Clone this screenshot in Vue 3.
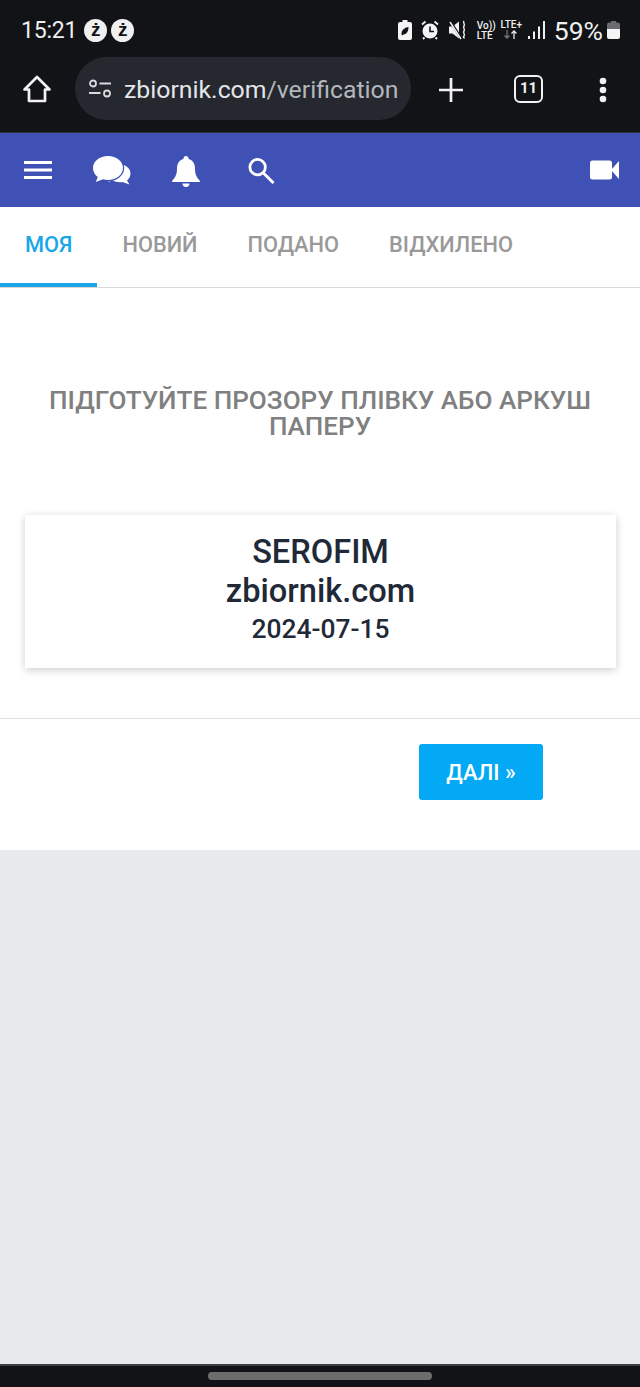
<script setup>
const tabs = [
  { label: 'МОЯ', active: true },
  { label: 'НОВИЙ' },
  { label: 'ПОДАНО' },
  { label: 'ВІДХИЛЕНО' }
]
</script>

<template>
  <div class="screen">
    <div class="chrome">
      <div class="status">
        <span class="time">15:21</span>
        <span class="zed">ż</span>
        <span class="zed">ż</span>
        <span class="spacer"></span>
        <svg class="st st-save" width="14" height="20" viewBox="0 0 14 20"><path d="M4.500 0h5v2H12a2 2 0 0 1 2 2v14a2 2 0 0 1-2 2H2a2 2 0 0 1-2-2V4a2 2 0 0 1 2-2h2.500z" fill="#f4f4f4"/><path d="M3.500 14c0-4 3-6.500 7-7 0 4-1.500 7-5 7.500l-1.500 1z" fill="#111317"/></svg>
        <svg class="st st-alarm" width="18" height="20" viewBox="0 0 18 20"><circle cx="9" cy="11" r="7.500" fill="#f4f4f4"/><path d="M9 6.500V11.500H13" fill="none" stroke="#111317" stroke-width="1.600"/><path d="M1 4.500 4.500 1.500M17 4.500 13.500 1.500M3.500 17.500 2 19M14.500 17.500 16 19" stroke="#f4f4f4" stroke-width="1.800"/></svg>
        <svg class="st st-mute" width="18" height="20" viewBox="0 0 18 20"><path d="M0 6.500h3.500L10 1.500v17L3.500 13.500H0z" fill="#f4f4f4"/><path d="M1 1 12 18" stroke="#111317" stroke-width="2.500"/><path d="M1 2 12 19" stroke="#f4f4f4" stroke-width="1.400"/><path d="M15 1c-1.500 2 1.500 3 0 5s1.500 3 0 5 1.500 3 0 5 .8 2 .8 2" fill="none" stroke="#f4f4f4" stroke-width="1.400"/></svg>
        <div class="volte"><span>Vo))</span><span>LTE</span></div>
        <div class="lte"><span>LTE+</span><svg width="16" height="9" viewBox="0 0 16 9"><path d="M4 0v8M1.500 5.500 4 8l2.500-2.500" fill="none" stroke="#777" stroke-width="1.300"/><path d="M11 9V1M8.500 3.500 11 1l2.500 2.500" fill="none" stroke="#e8e8e8" stroke-width="1.300"/></svg></div>
        <svg class="st st-signal" width="17" height="18" viewBox="0 0 17 18"><rect x="0" y="15" width="2" height="3" fill="#f0f0f0"/><rect x="5" y="10.500" width="2" height="7.500" fill="#f0f0f0"/><rect x="10" y="5.500" width="2" height="12.500" fill="#f0f0f0"/><rect x="15" y="0" width="2" height="18" fill="#f0f0f0"/></svg>
        <span class="pct">59%</span>
        <svg class="st st-batt" width="13" height="18" viewBox="0 0 13 18"><path d="M4 0h5v1.500h2A2 2 0 0 1 13 3.500V8H0V3.500a2 2 0 0 1 2-2h2z" fill="#6a6c6e"/><path d="M0 8h13v8a2 2 0 0 1-2 2H2a2 2 0 0 1-2-2z" fill="#f4f4f4"/></svg>
      </div>
      <div class="toolbar">
        <svg class="home" width="30" height="30" viewBox="0 0 30 30"><path d="M15 3 2.500 15.500H7V27h16V15.500h4.500z" fill="none" stroke="#f2f2f2" stroke-width="2.700" stroke-linejoin="round"/></svg>
        <div class="url">
          <svg width="24" height="20" viewBox="0 0 24 20"><circle cx="5" cy="4.500" r="3" fill="none" stroke="#d8dae0" stroke-width="1.800"/><path d="M11.500 4.500H23M1 14h11.500" stroke="#d8dae0" stroke-width="1.900"/><circle cx="19" cy="14.500" r="3" fill="none" stroke="#d8dae0" stroke-width="1.800"/></svg>
          <span class="url-text"><b>zbiornik.com</b>/verification</span>
        </div>
        <svg class="plus" width="26" height="26" viewBox="0 0 26 26"><path d="M13 1v24M1 13h24" stroke="#f2f2f2" stroke-width="2.700"/></svg>
        <div class="count">11</div>
        <svg class="dots" width="8" height="26" viewBox="0 0 8 26"><circle cx="4" cy="4" r="3.300" fill="#f2f2f2"/><circle cx="4" cy="13" r="3.300" fill="#f2f2f2"/><circle cx="4" cy="22" r="3.300" fill="#f2f2f2"/></svg>
      </div>
    </div>

    <header class="appbar">
      <svg class="burger" width="30" height="20" viewBox="0 0 30 20"><path d="M1 2.500h28M1 10h28M1 17.500h28" stroke="#fff" stroke-width="2.800"/></svg>
      <svg class="chat" width="38" height="30" viewBox="0 0 38 30">
        <path d="M27 9.500c6 0 10.500 4 10.500 9 0 3-1.500 5.300-3.500 7l2.500 4-7-2.500c-1 .2-1.800.3-2.500.3-3 0-5.500-.8-7.500-2l-4.500 2 3-3.500C16.500 21 16 18 16.500 16z" fill="#fff"/>
        <path d="M15 1C6.700 1 0 6.300 0 13c0 3.600 1.800 6.800 4.800 9L2.800 27l7.200-2.700c1.600.4 3.300.7 5 .7 8.300 0 15-5.300 15-12S23.300 1 15 1z" fill="#fff" stroke="#3f51b5" stroke-width="2.400" paint-order="stroke"/>
      </svg>
      <svg class="bell" width="28" height="32" viewBox="0 0 28 32"><path d="M14 0a2.500 2.500 0 0 1 2.500 3c4.500 1.200 6.500 5 6.500 9.500 0 6.500 2 9 4.800 12.300.4.500.1 1.200-.6 1.200H.8c-.7 0-1-.7-.6-1.200C3 21.500 5 19 5 12.500 5 8 7 4.200 11.500 3A2.500 2.500 0 0 1 14 0z" fill="#fff"/><path d="M10.500 27.500h7a3.500 3.500 0 0 1-7 0z" fill="#fff"/></svg>
      <svg class="search" width="28" height="28" viewBox="0 0 28 28"><circle cx="10.500" cy="10.500" r="8" fill="none" stroke="#fff" stroke-width="2.900"/><path d="M16.500 16.500 27 27" stroke="#fff" stroke-width="3"/></svg>
      <span class="spacer"></span>
      <svg class="video" width="29" height="20" viewBox="0 0 29 20"><rect x="0" y="0.500" width="22" height="19" rx="2.500" fill="#fff"/><path d="M21 10 29 1v18z" fill="#fff"/></svg>
    </header>

    <nav class="tabs">
      <a v-for="tab in tabs" :key="tab.label" class="tab" :class="{ active: tab.active }">{{ tab.label }}</a>
    </nav>

    <main class="panel">
      <h1 class="title">ПІДГОТУЙТЕ ПРОЗОРУ ПЛІВКУ АБО АРКУШ ПАПЕРУ</h1>
      <section class="card">
        <div class="big">SEROFIM</div>
        <div class="big">zbiornik.com</div>
        <div class="date">2024-07-15</div>
      </section>
      <div class="actions">
        <button class="next">ДАЛІ »</button>
      </div>
    </main>

    <div class="rest"></div>

    <div class="navbar"><span class="handle"></span></div>
  </div>
</template>

<style scoped>
.screen {
  width: 640px;
  height: 1387px;
  display: flex;
  flex-direction: column;
  font-family: Roboto, "Liberation Sans", sans-serif;
  background: #e8e9ed;
  overflow: hidden;
}
.chrome {
  height: 133px;
  box-sizing: border-box;
  background: #111317;
  border-bottom: 1px solid #2c3038;
  flex: none;
}
.status {
  height: 57px;
  box-sizing: border-box;
  padding: 19px 20px 0 21px;
  display: flex;
  align-items: flex-start;
  color: #efefef;
}
.time {
  font-size: 23px;
  line-height: 24px;
  margin-right: 7px;
  letter-spacing: -0.2px;
}
.zed {
  width: 23px;
  height: 23px;
  border-radius: 50%;
  background: #f0f0f0;
  color: #111317;
  font: 700 19px/22px "Liberation Sans", sans-serif;
  text-align: center;
  margin-right: 4px;
}
.spacer { flex: 1; }
.st { flex: none; }
.st-save { margin: 1px 9px 0 0; }
.st-alarm { margin: 1px 10px 0 0; }
.st-mute { margin: 1px 10px 0 0; }
.volte {
  display: flex;
  flex-direction: column;
  font: 500 10px/10px Roboto, sans-serif;
  margin: 2px 4px 0 0;
  width: 19px;
  white-space: nowrap;
}
.lte {
  display: flex;
  flex-direction: column;
  align-items: center;
  font: 500 10px/10px Roboto, sans-serif;
  margin: 1px 5px 0 0;
  width: 23px;
  white-space: nowrap;
}
.st-signal { margin: 2px 9px 0 0; }
.pct {
  font-size: 26.500px;
  line-height: 24px;
  margin-right: 4px;
}
.st-batt { margin-top: 2px; }
.toolbar {
  height: 75px;
  position: relative;
  display: flex;
  align-items: flex-start;
  padding-left: 22px;
}
.home { margin: 17px 0 0 0; flex: none; }
.url {
  width: 336px;
  height: 63px;
  margin-left: 23px;
  box-sizing: border-box;
  border-radius: 32px;
  background: #25282f;
  display: flex;
  align-items: center;
  padding-left: 13px;
  gap: 12px;
  flex: none;
  overflow: hidden;
}
.url-text {
  font-size: 24.800px;
  color: #b4b7bd;
  white-space: nowrap;
  margin-top: 2px;
}
.url-text b { font-weight: 400; color: #e4e6ea; }
.plus { margin: 20px 0 0 27px; flex: none; }
.count {
  width: 29px;
  height: 28px;
  box-sizing: border-box;
  border: 2.500px solid #f2f2f2;
  border-radius: 6px;
  margin: 18px 0 0 50px;
  text-align: center;
  font: 700 15px/23px Roboto, sans-serif;
  color: #f2f2f2;
  flex: none;
}
.dots { margin: 20px 0 0 56px; flex: none; }
.appbar {
  height: 74px;
  flex: none;
  background: #3f51b5;
  display: flex;
  align-items: flex-start;
  padding: 0 21px 0 23px;
}
.burger { margin-top: 27px; }
.chat { margin: 22px 0 0 40px; }
.bell { margin: 23px 0 0 41px; }
.search { margin: 24px 0 0 47px; width: 28px; height: 27px; }
.video { margin-top: 27px; }
.tabs {
  height: 81px;
  box-sizing: border-box;
  flex: none;
  background: #fff;
  border-bottom: 1px solid #d9d9d9;
  display: flex;
}
.tab {
  padding: 0 25px;
  height: 80px;
  box-sizing: border-box;
  line-height: 75px;
  font-size: 21.800px;
  font-weight: 500;
  color: #999;
  border-bottom: 4px solid transparent;
}
.tab.active {
  color: #1aa7e8;
  border-bottom-color: #1aa7e8;
}
.panel {
  background: #fff;
  height: 562px;
  flex: none;
  box-sizing: border-box;
  padding-top: 99px;
  display: flex;
  flex-direction: column;
}
.title {
  margin: 0 40px;
  font-size: 26.100px;
  line-height: 26px;
  font-weight: 500;
  color: #808080;
  text-align: center;
}
.card {
  margin: 76px 24px 0 25px;
  height: 153px;
  box-sizing: border-box;
  padding-top: 18px;
  background: #fff;
  box-shadow: 0 2px 8px rgba(0, 0, 0, 0.2);
  text-align: center;
  color: #1f2937;
}
.big {
  font-size: 32.600px;
  line-height: 39px;
  font-weight: 500;
}
.date {
  font-size: 26.400px;
  line-height: 37px;
  font-weight: 500;
}
.actions {
  margin-top: 50px;
  border-top: 1px solid #e0e0e0;
  padding: 25px 0 0 419px;
}
.next {
  width: 124px;
  height: 56px;
  border: 0;
  border-radius: 3px;
  background: #03a9f4;
  color: #fff;
  font: 500 22px Roboto, sans-serif;
}
.rest { flex: 1; }
.navbar {
  height: 23px;
  flex: none;
  box-sizing: border-box;
  background: #111317;
  border-top: 2px solid #3a3c40;
  display: flex;
  justify-content: center;
  padding-top: 6px;
}
.handle {
  width: 224px;
  height: 8px;
  border-radius: 4px;
  background: #6d6d6d;
}
</style>
